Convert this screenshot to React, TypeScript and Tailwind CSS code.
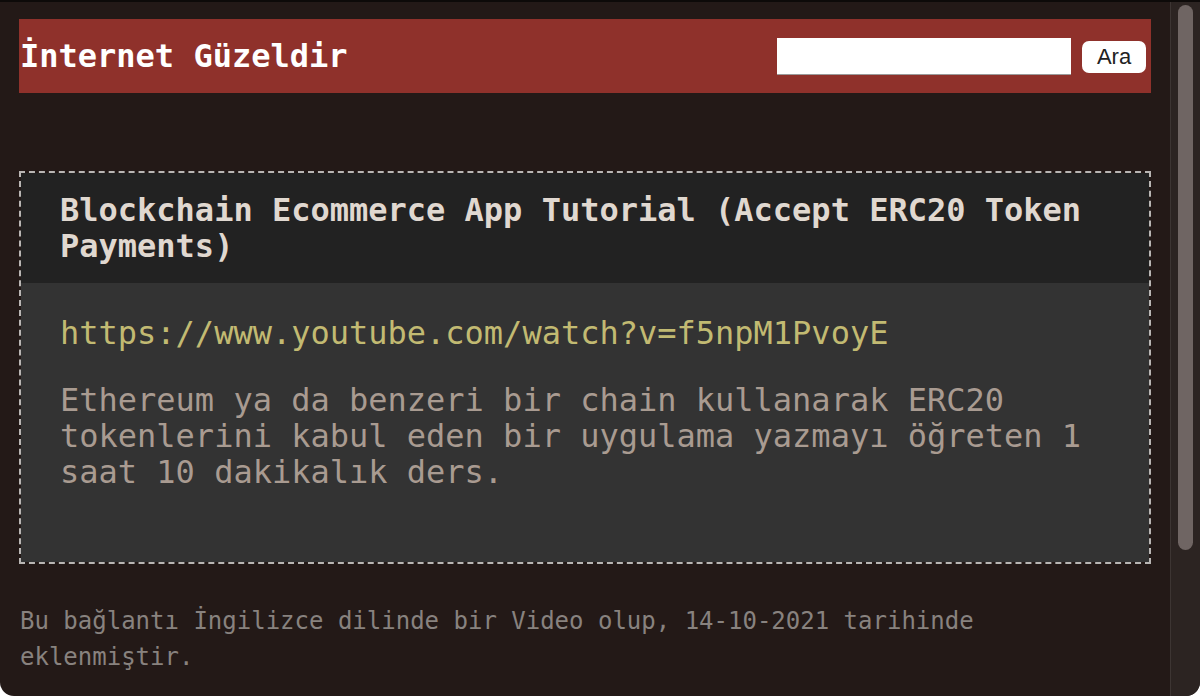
const App = () => {
    const link = "https://www.youtube.com/watch?v=f5npM1PvoyE";

    return (
        <div className="w-[1200px] h-[696px] bg-white overflow-hidden">
            <div className="flex h-full bg-[#231917] rounded-b-[14px] border-t-2 border-[#0d0a09] overflow-hidden"
                style={{ fontFamily: '"DejaVu Sans Mono", "Liberation Mono", monospace' }}>
                <main className="flex-1 px-[19px] pt-[17px]">
                    <header className="flex items-center justify-between h-[74px] bg-[#8f312b]">
                        <h1 className="pl-px text-[32px] font-bold text-white leading-[37px]">İnternet Güzeldir</h1>
                        <form className="flex items-center gap-[11px] pr-[5px]" onSubmit={e => e.preventDefault()}>
                            <input type="text" className="w-[294px] h-[37px] bg-white border-b border-[#9a9a9a] outline-none" />
                            <button type="submit"
                                className="w-[64px] h-[32px] mt-[2px] bg-white rounded-[7px] text-[22px] text-[#222] leading-none"
                                style={{ fontFamily: '"Liberation Sans", Arial, sans-serif' }}>
                                Ara
                            </button>
                        </form>
                    </header>

                    <article className="mt-[78px] border-2 border-dashed border-[#b9b6b4]">
                        <div className="bg-[#222222] pl-[39px] pr-[20px] py-[19px]">
                            <h2 className="text-[32px] font-bold leading-[36px] text-[#e0d8d0]">
                                Blockchain Ecommerce App Tutorial (Accept ERC20 Token Payments)
                            </h2>
                        </div>
                        <div className="bg-[#333333] pl-[39px] pr-[20px] pt-[32px] pb-[72px]">
                            <a href={link} className="block text-[32px] leading-[36px] text-[#c2ba72]">
                                {link}
                            </a>
                            <p className="mt-[31px] text-[32px] leading-[36px] text-[#a99b91]">
                                Ethereum ya da benzeri bir chain kullanarak ERC20 tokenlerini kabul eden bir uygulama yazmayı öğreten 1 saat 10 dakikalık ders.
                            </p>
                        </div>
                    </article>

                    <p className="mt-[39px] pl-px text-[24px] leading-[36px] text-[#88827f]">
                        Bu bağlantı İngilizce dilinde bir Video olup, 14-10-2021 tarihinde eklenmiştir.
                    </p>
                </main>

                <div className="w-[30px] h-full bg-[#2c2422] border-l border-[#3d3533] pl-[7px] pt-[3px]">
                    <div className="w-[15px] h-[545px] rounded-full bg-[#6f6563]" />
                </div>
            </div>
        </div>
    );
}

export default App;
